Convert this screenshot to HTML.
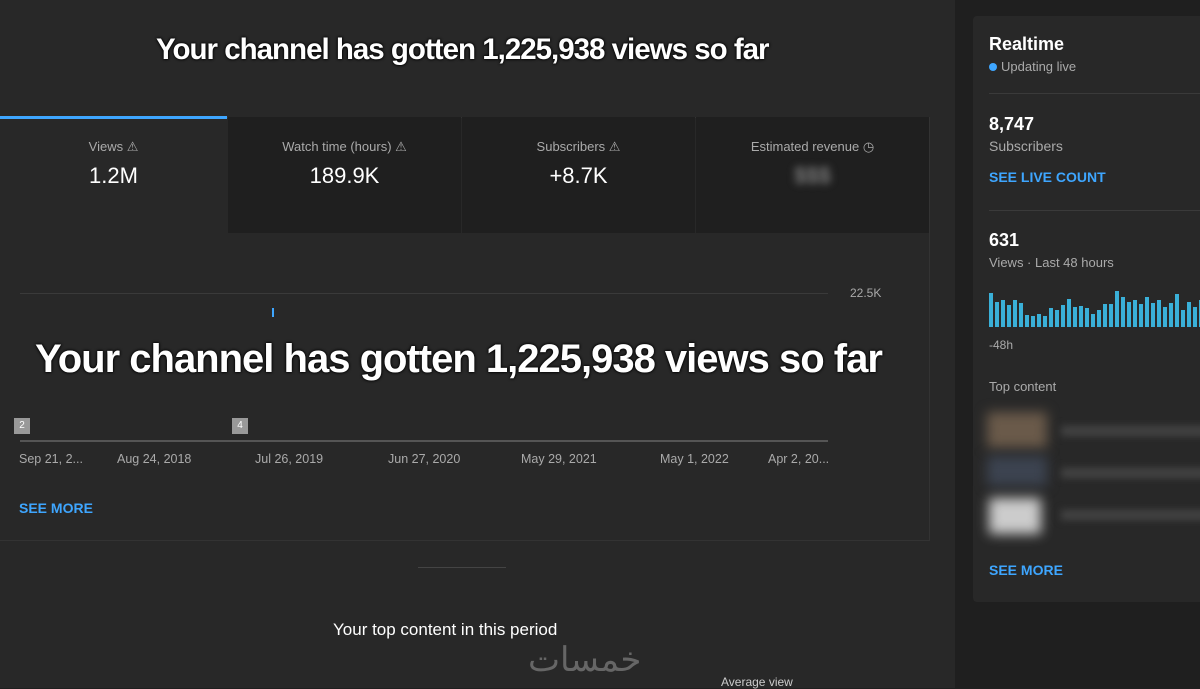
<!DOCTYPE html>
<html><head><style>
body{margin:0;width:1200px;height:688px;background:#1f1f1f;font-family:"Liberation Sans",sans-serif;overflow:hidden;position:relative;color:#fff}
.main{position:absolute;left:0;top:0;width:955px;height:688px;background:#282828}
.abs{position:absolute}
.tab{position:absolute;top:117px;height:116px;background:#1f1f1f;text-align:center}
.tab .l{font-size:13px;color:#aaa;margin-top:22px}
.tab .v{font-size:22px;color:#fff;margin-top:8px}
.ax{position:absolute;top:452px;font-size:12.5px;color:#aaa}
.big{font-weight:bold;color:#fff;text-shadow:0 0 3px #000,0 0 2px #000;letter-spacing:-1px;white-space:nowrap}
.side{position:absolute;left:973px;top:16px;width:240px;height:586px;background:#282828;border-radius:4px}
.blue{color:#3ea6ff;font-weight:bold;font-size:14px}
.hr{position:absolute;left:16px;right:0;height:1px;background:#3a3a3a}
</style></head><body>
<div class="main">
<div class="abs big" style="left:156px;top:33px;font-size:29.5px">Your channel has gotten 1,225,938 views so far</div>
<div class="abs" style="left:0;top:117px;width:930px;height:424px;border:1px solid #333;border-left:none;box-sizing:border-box"></div>
<div class="abs" style="left:0;top:116px;width:227px;height:3px;background:#3ea6ff"></div>
<div class="tab" style="left:0;width:227px;background:transparent"><div class="l">Views ⚠</div><div class="v">1.2M</div></div>
<div class="tab" style="left:228px;width:233px"><div class="l">Watch time (hours) ⚠</div><div class="v">189.9K</div></div>
<div class="tab" style="left:462px;width:233px"><div class="l">Subscribers ⚠</div><div class="v">+8.7K</div></div>
<div class="tab" style="left:696px;width:233px"><div class="l">Estimated revenue ◷</div><div class="v" style="filter:blur(4px);color:#999">$$$</div></div>
<div class="abs" style="left:20px;top:293px;width:808px;height:1px;background:#3a3a3a"></div>
<div class="abs" style="left:850px;top:286px;font-size:12px;color:#aaa">22.5K</div>
<div class="abs" style="left:272px;top:308px;width:2px;height:9px;background:#3ea6ff"></div>
<div class="abs big" style="left:35px;top:337px;font-size:40px">Your channel has gotten 1,225,938 views so far</div>
<div class="abs" style="left:14px;top:418px;width:16px;height:16px;background:#999;color:#fff;font-size:10px;text-align:center;line-height:16px">2</div>
<div class="abs" style="left:232px;top:418px;width:16px;height:16px;background:#999;color:#fff;font-size:10px;text-align:center;line-height:16px">4</div>
<div class="abs" style="left:20px;top:440px;width:808px;height:2px;background:#555"></div>
<div class="ax" style="left:19px">Sep 21, 2...</div><div class="ax" style="left:117px">Aug 24, 2018</div><div class="ax" style="left:255px">Jul 26, 2019</div><div class="ax" style="left:388px">Jun 27, 2020</div><div class="ax" style="left:521px">May 29, 2021</div><div class="ax" style="left:660px">May 1, 2022</div><div class="ax" style="left:768px">Apr 2, 20...</div>
<div class="abs blue" style="left:19px;top:500px">SEE MORE</div>
<div class="abs" style="left:418px;top:567px;width:88px;height:1px;background:#444"></div>
<div class="abs" style="left:333px;top:620px;font-size:17px">Your top content in this period</div>
<div class="abs" style="left:528px;top:640px;font-size:34px;color:#666">خمسات</div>
<div class="abs" style="left:721px;top:675px;font-size:12px;color:#ccc">Average view</div>
</div>
<div class="side">
<div class="abs" style="left:16px;top:18px;font-size:18px;font-weight:bold">Realtime</div>
<div class="abs" style="left:16px;top:43px;font-size:13px;color:#aaa"><span style="display:inline-block;width:8px;height:8px;border-radius:50%;background:#3ea6ff;margin-right:4px"></span>Updating live</div>
<div class="hr" style="top:77px"></div>
<div class="abs" style="left:16px;top:98px;font-size:18px;font-weight:bold">8,747</div>
<div class="abs" style="left:16px;top:122px;font-size:14px;color:#aaa">Subscribers</div>
<div class="abs blue" style="left:16px;top:153px">SEE LIVE COUNT</div>
<div class="hr" style="top:194px"></div>
<div class="abs" style="left:16px;top:214px;font-size:18px;font-weight:bold">631</div>
<div class="abs" style="left:16px;top:239px;font-size:13px;color:#aaa">Views · Last 48 hours</div>
<svg class="abs" style="left:16px;top:270px" width="230" height="42" fill="#3ab0d8">
<rect x="0" y="7" width="4" height="34"/><rect x="6" y="16" width="4" height="25"/><rect x="12" y="14" width="4" height="27"/><rect x="18" y="19" width="4" height="22"/><rect x="24" y="14" width="4" height="27"/><rect x="30" y="17" width="4" height="24"/><rect x="36" y="29" width="4" height="12"/><rect x="42" y="30" width="4" height="11"/><rect x="48" y="28" width="4" height="13"/><rect x="54" y="30" width="4" height="11"/><rect x="60" y="22" width="4" height="19"/><rect x="66" y="24" width="4" height="17"/><rect x="72" y="19" width="4" height="22"/><rect x="78" y="13" width="4" height="28"/><rect x="84" y="21" width="4" height="20"/><rect x="90" y="20" width="4" height="21"/><rect x="96" y="22" width="4" height="19"/><rect x="102" y="28" width="4" height="13"/><rect x="108" y="24" width="4" height="17"/><rect x="114" y="18" width="4" height="23"/><rect x="120" y="18" width="4" height="23"/><rect x="126" y="5" width="4" height="36"/><rect x="132" y="11" width="4" height="30"/><rect x="138" y="16" width="4" height="25"/><rect x="144" y="14" width="4" height="27"/><rect x="150" y="18" width="4" height="23"/><rect x="156" y="11" width="4" height="30"/><rect x="162" y="17" width="4" height="24"/><rect x="168" y="14" width="4" height="27"/><rect x="174" y="21" width="4" height="20"/><rect x="180" y="17" width="4" height="24"/><rect x="186" y="8" width="4" height="33"/><rect x="192" y="24" width="4" height="17"/><rect x="198" y="16" width="4" height="25"/><rect x="204" y="21" width="4" height="20"/><rect x="210" y="14" width="4" height="27"/>
</svg>
<div class="abs" style="left:16px;top:322px;font-size:12px;color:#aaa">-48h</div>
<div class="abs" style="left:16px;top:363px;font-size:13px;color:#aaa">Top content</div>
<div class="abs" style="left:14px;top:396px;width:60px;height:36px;background:#6a5a4a;filter:blur(6px)"></div>
<div class="abs" style="left:88px;top:410px;width:150px;height:10px;background:#444;filter:blur(4px)"></div>
<div class="abs" style="left:14px;top:440px;width:60px;height:30px;background:#3c4350;filter:blur(6px)"></div>
<div class="abs" style="left:88px;top:452px;width:150px;height:10px;background:#444;filter:blur(4px)"></div>
<div class="abs" style="left:16px;top:482px;width:52px;height:36px;background:#ccc;filter:blur(6px)"></div>
<div class="abs" style="left:88px;top:494px;width:150px;height:10px;background:#444;filter:blur(4px)"></div>
<div class="abs blue" style="left:16px;top:546px">SEE MORE</div>
</div>
</body></html>
